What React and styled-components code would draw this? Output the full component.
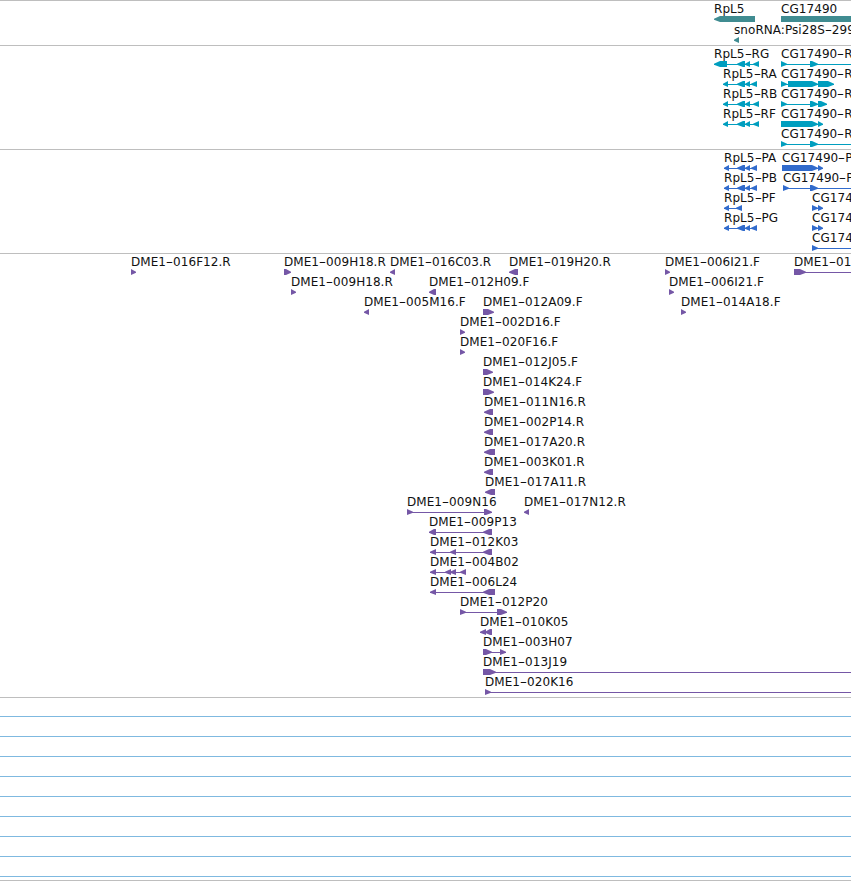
import React from "react";
import styled, { createGlobalStyle } from "styled-components";

const VIEW_END = 860;

// name, start, strand, exons [from, to], runs past the right edge
const f = (name, start, strand, exons, open) => ({
  name,
  start,
  strand,
  exons,
  open,
});

const genes = [
  [f("RpL5", 714, "L", [[714, 755]]), f("CG17490", 781, "R", [[781, 870]])],
  [f("snoRNA:Psi28S-299", 734, "L", [[734, 739]])],
];

const transcripts = [
  [
    f("RpL5-RG", 714, "L", [[714, 727], [737, 745], [745, 750], [753, 759]]),
    f("CG17490-R", 781, "R", [[781, 787], [810, 818]], true),
  ],
  [
    f("RpL5-RA", 723, "L", [[723, 728], [737, 745], [745, 750], [751, 757]]),
    f("CG17490-R", 781, "R", [[781, 787], [788, 818], [818, 834]]),
  ],
  [
    f("RpL5-RB", 723, "L", [[723, 728], [737, 745], [745, 750], [753, 759]]),
    f("CG17490-R", 781, "R", [[781, 787], [810, 818], [818, 827]]),
  ],
  [
    f("RpL5-RF", 723, "L", [[723, 728], [737, 745], [745, 750], [753, 759]]),
    f("CG17490-R", 781, "R", [[781, 818], [818, 823]]),
  ],
  [f("CG17490-R", 781, "R", [[781, 787], [810, 818]], true)],
];

const proteins = [
  [
    f("RpL5-PA", 724, "L", [[724, 729], [737, 745], [745, 750], [751, 757]]),
    f("CG17490-P", 782, "R", [[782, 818], [818, 823]]),
  ],
  [
    f("RpL5-PB", 724, "L", [[724, 729], [737, 745], [745, 750], [751, 757]]),
    f("CG17490-P", 783, "R", [[783, 789], [810, 818]], true),
  ],
  [
    f("RpL5-PF", 724, "L", [[724, 729], [736, 742]]),
    f("CG17490-P", 812, "R", [[812, 818], [818, 823]]),
  ],
  [
    f("RpL5-PG", 724, "L", [[724, 729], [737, 745], [745, 750], [751, 757]]),
    f("CG17490-P", 812, "R", [[812, 818], [818, 823]]),
  ],
  [f("CG17490-P", 812, "R", [[812, 818]], true)],
];

const clones = [
  [
    f("DME1-016F12.R", 131, "R", [[131, 136]]),
    f("DME1-009H18.R", 284, "R", [[284, 291]]),
    f("DME1-016C03.R", 390, "L", [[390, 395]]),
    f("DME1-019H20.R", 509, "L", [[509, 518]]),
    f("DME1-006I21.F", 665, "R", [[665, 670]]),
    f("DME1-01", 794, "R", [[794, 806]], true),
  ],
  [
    f("DME1-009H18.R", 291, "R", [[291, 296]]),
    f("DME1-012H09.F", 429, "L", [[429, 436]]),
    f("DME1-006I21.F", 669, "R", [[669, 674]]),
  ],
  [
    f("DME1-005M16.F", 364, "L", [[364, 369]]),
    f("DME1-012A09.F", 483, "R", [[483, 494]]),
    f("DME1-014A18.F", 681, "R", [[681, 686]]),
  ],
  [f("DME1-002D16.F", 460, "R", [[460, 465]])],
  [f("DME1-020F16.F", 460, "R", [[460, 465]])],
  [f("DME1-012J05.F", 483, "R", [[483, 493]])],
  [f("DME1-014K24.F", 483, "R", [[483, 494]])],
  [f("DME1-011N16.R", 484, "L", [[484, 493]])],
  [f("DME1-002P14.R", 484, "L", [[484, 493]])],
  [f("DME1-017A20.R", 484, "L", [[484, 495]])],
  [f("DME1-003K01.R", 484, "L", [[484, 493]])],
  [f("DME1-017A11.R", 485, "L", [[485, 495]])],
  [
    f("DME1-009N16", 407, "R", [[407, 413], [484, 492]]),
    f("DME1-017N12.R", 524, "L", [[524, 529]]),
  ],
  [f("DME1-009P13", 429, "L", [[429, 436], [483, 492]])],
  [f("DME1-012K03", 430, "L", [[430, 436], [450, 456], [483, 492]])],
  [f("DME1-004B02", 430, "L", [[430, 436], [445, 451], [450, 456], [460, 466]])],
  [f("DME1-006L24", 430, "L", [[430, 436], [483, 495]])],
  [f("DME1-012P20", 460, "R", [[460, 466], [497, 507]])],
  [f("DME1-010K05", 480, "L", [[480, 486], [485, 492]])],
  [f("DME1-003H07", 483, "R", [[483, 492], [500, 506]])],
  [f("DME1-013J19", 483, "R", [[483, 496]], true)],
  [f("DME1-020K16", 485, "R", [[485, 491]], true)],
];

// short exons are plain triangles, longer ones get a blunter head
const exonPoints = (from, to, strand) => {
  const head = Math.min(to - from, 8);
  const blunt = head > 6 ? 2 : 0;
  if (strand === "L") {
    const neck = from + head - blunt;
    return `${from},2.7 ${neck},0 ${to},0 ${to},6 ${neck},6 ${from},3.7`;
  }
  const neck = to - head + blunt;
  return `${from},0 ${neck},0 ${to},2.7 ${to},3.7 ${neck},6 ${from},6`;
};

const Feature = ({ name, start, strand, exons, open }) => {
  const end = open ? VIEW_END : exons[exons.length - 1][1];
  const [head, tail] = name.split("-");
  return (
    <Item $start={start}>
      <Label>
        {head}
        {tail && <Dash>-</Dash>}
        {tail}
      </Label>
      <Glyph width={end - start} height="6">
        {exons.length > 1 || open ? (
          <rect x="0" y="3" width={end - start} height="1" />
        ) : null}
        {exons.map(([from, to]) => (
          <polygon
            key={from}
            points={exonPoints(from - start, to - start, strand)}
          />
        ))}
      </Glyph>
    </Item>
  );
};

const FeatureTrack = ({ rows, color, rowHeight = 20, gap = 3 }) => (
  <Track $color={color} $gap={gap}>
    {rows.map((row, i) => (
      <Row key={i} $height={rowHeight}>
        {row.map((feature) => (
          <Feature key={feature.start} {...feature} />
        ))}
      </Row>
    ))}
  </Track>
);

export default function App() {
  return (
    <Browser>
      <GlobalStyle />
      <FeatureTrack rows={genes} color="#408c91" rowHeight={21} gap={2} />
      <FeatureTrack rows={transcripts} color="#009ebf" />
      <FeatureTrack rows={proteins} color="#316bcc" />
      <FeatureTrack rows={clones} color="#7557a6" />
      <Plot>
        {Array.from({ length: 9 }, (_, i) => (
          <GridLine key={i} />
        ))}
      </Plot>
    </Browser>
  );
}

const GlobalStyle = createGlobalStyle`
  body {
    margin: 0;
    background: #fff;
    overflow: hidden;
  }
`;

const Browser = styled.main`
  width: 851px;
  height: 881px;
  overflow: hidden;
  font-family: "DejaVu Sans", sans-serif;
  font-size: 12px;
  line-height: 14px;
  letter-spacing: 0.06px;
`;

const Track = styled.section`
  border-top: 1px solid #bebebe;
  padding-bottom: ${({ $gap }) => $gap}px;
  color: ${({ $color }) => $color};
`;

const Row = styled.div`
  position: relative;
  height: ${({ $height }) => $height}px;
`;

/* features sit at their own coordinate along the sequence */
const Item = styled.div`
  position: absolute;
  left: ${({ $start }) => $start}px;
  display: flex;
  flex-direction: column;
  padding-top: 1px;
`;

const Label = styled.span`
  height: 14px;
  color: #111;
  white-space: nowrap;
`;

const Dash = styled.span`
  display: inline-block;
  width: 7px;
  text-align: center;
  transform: scaleX(1.7);
`;

const Glyph = styled.svg`
  display: block;
  fill: currentColor;
`;

const Plot = styled.section`
  height: 164px;
  padding-top: 18px;
  border-top: 1px solid #bebebe;
  border-bottom: 1px solid #bebebe;
`;

const GridLine = styled.div`
  height: 1px;
  margin-bottom: 19px;
  background: #7fb9e0;
`;
